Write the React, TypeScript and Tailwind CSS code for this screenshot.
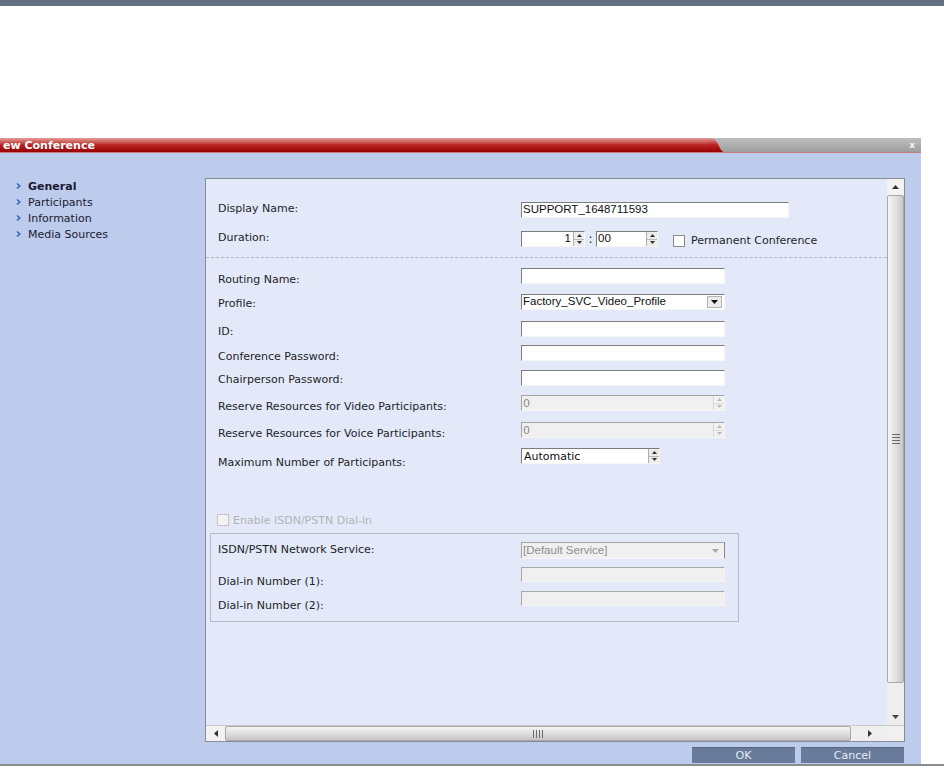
import React from "react";

const F = "font-['DejaVu_Sans','Verdana',sans-serif]";
const A = "font-['Liberation_Sans','Arial',sans-serif]";

function TriUp({ c = "#222" }: { c?: string }) {
  return (
    <svg width="7" height="4" viewBox="0 0 7 4">
      <polygon points="0,4 7,4 3.5,0" fill={c} />
    </svg>
  );
}
function TriDown({ c = "#222" }: { c?: string }) {
  return (
    <svg width="7" height="4" viewBox="0 0 7 4">
      <polygon points="0,0 7,0 3.5,4" fill={c} />
    </svg>
  );
}

function SpinBtn({ disabled = false }: { disabled?: boolean }) {
  const c = disabled ? "#b8b8b8" : "#333";
  return (
    <div className={`flex h-full w-[11px] flex-col border-l ${disabled ? "border-[#d8d8d8]" : "border-[#b0b0b0]"}`}>
      <div className={`flex flex-1 items-center justify-center border-b ${disabled ? "border-[#dcdcdc] bg-[#f2f2f2]" : "border-[#b8b8b8] bg-[#ececec]"}`}>
        <svg width="5" height="3" viewBox="0 0 5 3"><polygon points="0,3 5,3 2.5,0" fill={c} /></svg>
      </div>
      <div className={`flex flex-1 items-center justify-center ${disabled ? "bg-[#f2f2f2]" : "bg-[#ececec]"}`}>
        <svg width="5" height="3" viewBox="0 0 5 3"><polygon points="0,0 5,0 2.5,3" fill={c} /></svg>
      </div>
    </div>
  );
}

function TextInput({ w, value = "", h = "h-[16px]", disabled = false }: { w: string; value?: string; h?: string; disabled?: boolean }) {
  return (
    <div
      className={`${w} ${h} flex items-center border-t border-l border-b border-r ${
        disabled
          ? "border-t-[#a8a8a8] border-l-[#a8a8a8] border-b-[#f4f4f4] border-r-[#f4f4f4] bg-[#f0f0f0]"
          : "border-t-[#7c7c7c] border-l-[#7c7c7c] border-b-[#f6f6f6] border-r-[#f6f6f6] bg-white"
      } ${A} text-[11.5px] leading-none text-[#101010] pl-[1px]`}
    >
      {value}
    </div>
  );
}

export default function App() {
  const label = `${F} text-[11px] leading-[14px] text-[#1e1e28] whitespace-nowrap`;
  return (
    <div className={`relative h-[771px] w-[944px] overflow-hidden bg-white ${F}`}>
      <div className="h-[6px] bg-[#627181]" />
      <div className="h-[132px]" />
      <div className="w-[921px]">
        {/* Title bar */}
        <div className="flex h-[14px]">
          <div className="flex w-[708px] items-center bg-gradient-to-b from-[#e49a9a] via-[#b82222] to-[#980000] pl-[3px]">
            <span className={`${F} text-[11px] font-bold leading-none text-white`}>ew Conference</span>
          </div>
          <svg width="17" height="14" viewBox="0 0 17 14" className="block">
            <defs>
              <linearGradient id="rg" x1="0" y1="0" x2="0" y2="1">
                <stop offset="0" stopColor="#e49a9a" />
                <stop offset="0.5" stopColor="#b82222" />
                <stop offset="1" stopColor="#980000" />
              </linearGradient>
              <linearGradient id="gg" x1="0" y1="0" x2="0" y2="1">
                <stop offset="0" stopColor="#bdbdbd" />
                <stop offset="1" stopColor="#9e9e9e" />
              </linearGradient>
            </defs>
            <rect x="0" y="0" width="17" height="14" fill="url(#gg)" />
            <path d="M0,0 L2,0 C7,0 9,4 11,8 C13,12 14,14 17,14 L0,14 Z" fill="url(#rg)" />
          </svg>
          <div className="flex flex-1 items-center justify-end bg-gradient-to-b from-[#bdbdbd] to-[#9e9e9e] pr-[6px]">
            <span className={`${F} text-[9px] font-bold leading-none text-[#f4f4f4]`}>x</span>
          </div>
        </div>
        <div className="h-[1px] bg-[#c47c7c]" />
        {/* Body */}
        <div className="flex h-[611px] bg-[#bdcbec]">
          {/* Nav */}
          <div className="w-[205px] pt-[25px]">
            {[
              { t: "General", b: true },
              { t: "Participants" },
              { t: "Information" },
              { t: "Media Sources" },
            ].map((it) => (
              <div key={it.t} className="flex h-[16px] items-center">
                <svg width="5" height="6" viewBox="0 0 5 6" className="ml-[16px]">
                  <path d="M1,0.5 L3.8,3 L1,5.5" stroke="#2f64b8" strokeWidth="1.5" fill="none" />
                </svg>
                <span className={`ml-[7px] text-[11px] leading-none text-[#1a1a30] ${it.b ? "font-bold" : ""}`}>{it.t}</span>
              </div>
            ))}
          </div>
          {/* Right column */}
          <div className="flex flex-col pt-[25px]">
            <div className="flex h-[564px] w-[700px] flex-col border border-[#8a8c92]">
              <div className="flex flex-1">
                {/* Content */}
                <div className="flex-1 overflow-hidden bg-[#e3e9f8] pt-[21px]">
                  <div className="flex h-[28px] pl-[12px]">
                    <div className={`w-[303px] pt-[2px] ${label}`}>Display Name:</div>
                    <div className="pt-[2px]"><TextInput w="w-[268px]" value="SUPPORT_1648711593" /></div>
                  </div>
                  <div className="flex h-[24px] pl-[12px]">
                    <div className={`w-[303px] pt-[3px] ${label}`}>Duration:</div>
                    <div className="flex items-start pt-[3px]">
                      <div className="flex h-[16px] w-[64px] border-t border-l border-b border-r border-t-[#7c7c7c] border-l-[#7c7c7c] border-b-[#f6f6f6] border-r-[#f6f6f6] bg-white">
                        <div className={`flex flex-1 items-center justify-end pr-[2px] ${A} text-[11.5px] leading-none text-[#101010]`}>1</div>
                        <SpinBtn />
                      </div>
                      <div className={`flex h-[16px] w-[11px] items-center justify-center ${F} text-[12px] leading-none text-[#222]`}>:</div>
                      <div className="flex h-[16px] w-[62px] border-t border-l border-b border-r border-t-[#7c7c7c] border-l-[#7c7c7c] border-b-[#f6f6f6] border-r-[#f6f6f6] bg-white">
                        <div className={`flex flex-1 items-center pl-[1px] ${A} text-[11.5px] leading-none text-[#101010]`}>00</div>
                        <SpinBtn />
                      </div>
                      <div className="ml-[15px] mt-[4px] h-[12px] w-[12px] border border-[#8a8a8a] bg-white" />
                      <div className={`ml-[6px] pt-[3px] ${label}`}>Permanent Conference</div>
                    </div>
                  </div>
                  <div className="mt-[5px] border-t border-dashed border-[#b0b6c6]" />
                  <div className="flex h-[26px] pl-[12px]">
                    <div className={`w-[303px] pt-[15px] ${label}`}>Routing Name:</div>
                    <div className="pt-[10px]"><TextInput w="w-[204px]" /></div>
                  </div>
                  <div className="flex h-[28px] pl-[12px]">
                    <div className={`w-[303px] pt-[13px] ${label}`}>Profile:</div>
                    <div className="pt-[10px]">
                      <div className="flex h-[16px] w-[204px] items-center border-t border-l border-b border-r border-t-[#7c7c7c] border-l-[#7c7c7c] border-b-[#f6f6f6] border-r-[#f6f6f6] bg-white pr-[2px]">
                        <div className={`flex-1 pl-[1px] ${A} text-[11.5px] leading-none text-[#101010]`}>Factory_SVC_Video_Profile</div>
                        <div className="flex h-[12px] w-[15px] items-center justify-center border border-[#b4b4b4] bg-[#ececec]">
                          <TriDown c="#111" />
                        </div>
                      </div>
                    </div>
                  </div>
                  <div className="flex h-[27px] pl-[12px]">
                    <div className={`w-[303px] pt-[13px] ${label}`}>ID:</div>
                    <div className="pt-[9px]"><TextInput w="w-[204px]" /></div>
                  </div>
                  <div className="flex h-[23px] pl-[12px]">
                    <div className={`w-[303px] pt-[11px] ${label}`}>Conference Password:</div>
                    <div className="pt-[6px]"><TextInput w="w-[204px]" /></div>
                  </div>
                  <div className="flex h-[25px] pl-[12px]">
                    <div className={`w-[303px] pt-[11px] ${label}`}>Chairperson Password:</div>
                    <div className="pt-[8px]"><TextInput w="w-[204px]" /></div>
                  </div>
                  {["Reserve Resources for Video Participants:", "Reserve Resources for Voice Participants:"].map((t) => (
                    <div key={t} className="flex h-[27px] pl-[12px]">
                      <div className={`w-[303px] pt-[13px] ${label}`}>{t}</div>
                      <div className="pt-[8px]">
                        <div className="flex h-[16px] w-[204px] border-t border-l border-b border-r border-t-[#a4a4a4] border-l-[#a4a4a4] border-b-[#f6f6f6] border-r-[#f6f6f6] bg-[#f0f0f0]">
                          <div className={`flex flex-1 items-center pl-[1px] ${F} text-[11px] leading-none text-[#8c8c8c]`}>0</div>
                          <SpinBtn disabled />
                        </div>
                      </div>
                    </div>
                  ))}
                  <div className="flex h-[28px] pl-[12px]">
                    <div className={`w-[303px] pt-[15px] ${label}`}>Maximum Number of Participants:</div>
                    <div className="pt-[7px]">
                      <div className="flex h-[16px] w-[139px] border-t border-l border-b border-r border-t-[#7c7c7c] border-l-[#7c7c7c] border-b-[#f6f6f6] border-r-[#f6f6f6] bg-white">
                        <div className={`flex flex-1 items-center pl-[2px] ${F} text-[11px] leading-none text-[#101010]`}>Automatic</div>
                        <SpinBtn />
                      </div>
                    </div>
                  </div>
                  <div className="mt-[44px] flex h-[14px] items-center pl-[11px]">
                    <div className="h-[12px] w-[12px] border border-[#c4c4c4] bg-[#f2f2f2]" />
                    <span className={`ml-[4px] ${F} text-[11px] leading-none text-[#b4b4b8]`}>Enable ISDN/PSTN Dial-in</span>
                  </div>
                  <div className="ml-[4px] mt-[6px] w-[529px] border border-[#b6bac6] pb-[14px]">
                    <div className="flex h-[25px] pl-[7px]">
                      <div className={`w-[303px] pt-[9px] ${label}`}>ISDN/PSTN Network Service:</div>
                      <div className="pt-[8px]">
                        <div className="flex h-[17px] w-[204px] items-center border-t border-l border-b border-r border-t-[#a4a4a4] border-l-[#a4a4a4] border-b-[#f6f6f6] border-r-[#8a8a8a] bg-[#f0f0f0] pr-[3px]">
                          <div className={`flex-1 pl-[1px] ${A} text-[11.5px] leading-none text-[#8e8e8e]`}>[Default Service]</div>
                          <TriDown c="#a8a8a8" />
                          <div className="w-[2px]" />
                        </div>
                      </div>
                    </div>
                    <div className="flex h-[24px] pl-[7px]">
                      <div className={`w-[303px] pt-[16px] ${label}`}>Dial-in Number (1):</div>
                      <div className="pt-[8px]"><TextInput w="w-[204px]" h="h-[15px]" disabled /></div>
                    </div>
                    <div className="flex h-[24px] pl-[7px]">
                      <div className={`w-[303px] pt-[16px] ${label}`}>Dial-in Number (2):</div>
                      <div className="pt-[8px]"><TextInput w="w-[204px]" h="h-[15px]" disabled /></div>
                    </div>
                  </div>
                </div>
                {/* Vertical scrollbar */}
                <div className="flex w-[17px] flex-col bg-[#eeeeee]">
                  <div className="flex h-[16px] items-center justify-center bg-[#f2f2f2]">
                    <TriUp c="#333" />
                  </div>
                  <div className="flex h-[488px] items-center justify-center rounded-[2px] border border-[#a8a8a8] bg-gradient-to-r from-[#f6f6f6] via-[#e2e2e2] to-[#c8c8c8]">
                    <div className="flex flex-col gap-[2px]">
                      <div className="h-[1px] w-[8px] bg-[#6a6a6a]" />
                      <div className="h-[1px] w-[8px] bg-[#6a6a6a]" />
                      <div className="h-[1px] w-[8px] bg-[#6a6a6a]" />
                      <div className="h-[1px] w-[8px] bg-[#6a6a6a]" />
                    </div>
                  </div>
                  <div className="flex-1" />
                  <div className="flex h-[16px] items-center justify-center">
                    <TriDown c="#444" />
                  </div>
                </div>
              </div>
              {/* Horizontal scrollbar */}
              <div className="flex h-[16px] border-t border-[#c8c8c8] bg-[#eeeeee]">
                <div className="flex w-[19px] items-center justify-center bg-[#f2f2f2]">
                  <svg width="4" height="7" viewBox="0 0 4 7"><polygon points="4,0 4,7 0,3.5" fill="#333" /></svg>
                </div>
                <div className="flex w-[626px] items-center justify-center rounded-[2px] border border-[#a8a8a8] bg-gradient-to-b from-[#f4f4f4] via-[#dedede] to-[#c6c6c6]">
                  <div className="flex gap-[2px]">
                    <div className="h-[8px] w-[1px] bg-[#6a6a6a]" />
                    <div className="h-[8px] w-[1px] bg-[#6a6a6a]" />
                    <div className="h-[8px] w-[1px] bg-[#6a6a6a]" />
                    <div className="h-[8px] w-[1px] bg-[#6a6a6a]" />
                  </div>
                </div>
                <div className="flex-1" />
                <div className="flex w-[22px] items-center justify-start pl-[3px]">
                  <svg width="4" height="7" viewBox="0 0 4 7"><polygon points="0,0 0,7 4,3.5" fill="#333" /></svg>
                </div>
                <div className="w-[17px] bg-[#f0f0f0]" />
              </div>
            </div>
            {/* Buttons */}
            <div className="mt-[5px] flex h-[16px] justify-end gap-[6px] pr-[1px]">
              <div className="flex w-[103px] items-center justify-center border-t border-[#55677f] bg-[#687b9b] text-[11px] leading-none text-[#e6ecf6]">OK</div>
              <div className="flex w-[103px] items-center justify-center border-t border-[#55677f] bg-[#687b9b] text-[11px] leading-none text-[#e6ecf6]">Cancel</div>
            </div>
          </div>
        </div>
      </div>
      <div className="h-[2px] w-[944px] bg-[#8c8c8c]" />
    </div>
  );
}
